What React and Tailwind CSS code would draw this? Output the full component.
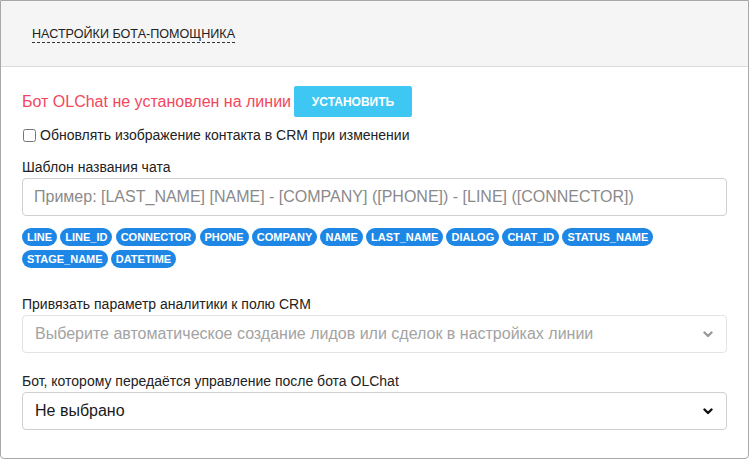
import React from "react";

const tags = [
  "LINE",
  "LINE_ID",
  "CONNECTOR",
  "PHONE",
  "COMPANY",
  "NAME",
  "LAST_NAME",
  "DIALOG",
  "CHAT_ID",
  "STATUS_NAME",
  "STAGE_NAME",
  "DATETIME",
];

function Chevron({ className }) {
  return (
    <svg
      viewBox="0 0 10 7"
      className={className}
      fill="none"
      stroke="currentColor"
      strokeWidth="2.4"
      strokeLinecap="round"
      strokeLinejoin="round"
    >
      <path d="M1.5 1.5 L5 5 L8.5 1.5" />
    </svg>
  );
}

function FakeSelect({ value, disabled }) {
  return (
    <div
      className={
        "mt-[1px] h-[38px] rounded-[4px] border flex items-center justify-between pl-[12px] pr-[13px] text-[16px] " +
        (disabled
          ? "border-[#e3e3e3] text-[#a3a3a3]"
          : "border-[#cfcfcf] text-[#1a1a1a]")
      }
    >
      <span>{value}</span>
      <Chevron
        className={
          "w-[10px] h-[7px] " + (disabled ? "text-[#9a9a9a]" : "text-[#111]")
        }
      />
    </div>
  );
}

export default function App() {
  return (
    <div
      className="w-[751px] h-[463px] bg-white"
      style={{ fontFamily: '"Liberation Sans", Arial, sans-serif' }}
    >
      <div className="w-[749px] border border-[#a8a8a8] rounded-b-[4px] bg-white">
        <div className="h-[66px] bg-[#f5f5f5] border-b border-[#dcdcdc] flex items-center pl-[31px]">
          <span className="text-[12.6px] text-[#222] border-b border-dashed border-[#333] leading-[16px] mt-[2px]">
            НАСТРОЙКИ БОТА-ПОМОЩНИКА
          </span>
        </div>

        <div className="px-[21px] pt-[19px] pb-[28px]">
          <div className="flex items-center h-[31px]">
            <span className="text-[16px] text-[#f2475d]">
              Бот OLChat не установлен на линии
            </span>
            <button className="ml-[3px] w-[118px] h-[31px] bg-[#3fc7f3] rounded-[2px] text-white text-[12px] font-bold">
              УСТАНОВИТЬ
            </button>
          </div>

          <label className="mt-[8px] h-[20px] flex items-center text-[14px] text-[#222]">
            <input
              type="checkbox"
              className="w-[13px] h-[13px] ml-[1px] mr-[4px]"
            />
            <span>Обновлять изображение контакта в CRM при изменении</span>
          </label>

          <div className="mt-[12px] h-[20px] flex items-center text-[14px] text-[#222]">
            Шаблон названия чата
          </div>
          <input
            className="mt-[1px] w-full h-[38px] rounded-[4px] border border-[#cfcfcf] px-[11px] text-[16px] outline-none placeholder:text-[#8a8a8a]"
            placeholder="Пример: [LAST_NAME] [NAME] - [COMPANY] ([PHONE]) - [LINE] ([CONNECTOR])"
          />

          <div className="mt-[12px] flex flex-wrap gap-x-[3.2px] gap-y-[4px] w-[640px]">
            {tags.map((t) => (
              <span
                key={t}
                className="h-[18px] px-[5px] rounded-full bg-[#1e87e6] text-white text-[11px] font-bold flex items-center"
              >
                {t}
              </span>
            ))}
          </div>

          <div className="mt-[26px] h-[20px] flex items-center text-[14px] text-[#222]">
            Привязать параметр аналитики к полю CRM
          </div>
          <FakeSelect
            disabled
            value="Выберите автоматическое создание лидов или сделок в настройках линии"
          />

          <div className="mt-[18px] h-[20px] flex items-center text-[14px] text-[#222]">
            Бот, которому передаётся управление после бота OLChat
          </div>
          <FakeSelect value="Не выбрано" />
        </div>
      </div>
    </div>
  );
}
